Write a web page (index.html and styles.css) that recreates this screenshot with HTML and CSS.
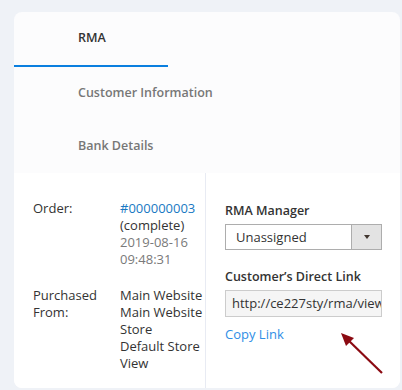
FILE: index.html
```html
<!DOCTYPE html>
<html>
<head>
    <meta charset="UTF-8">
    <title>RMA</title>
    <link rel="stylesheet" href="styles.css">
</head>
<body>
    <!-- card with tabs and the RMA info -->
    <div class="card">
        <div class="tabs">
            <div class="tab active">RMA</div>
            <div class="tab">Customer Information</div>
            <div class="tab">Bank Details</div>
        </div>

        <div class="content">
            <div class="info_col">
                <div class="info_row">
                    <span class="label">Order:</span>
                    <span class="value">
                        <a class="link">#000000003</a><br>
                        (complete)<br>
                        <span class="muted">2019-08-16<br>09:48:31</span>
                    </span>
                </div>
                <div class="info_row">
                    <span class="label">Purchased From:</span>
                    <span class="value">Main Website<br>Main Website Store<br>Default Store View</span>
                </div>
            </div>

            <div class="form_col">
                <div class="field">
                    <div class="field_label">RMA Manager</div>
                    <div class="select">
                        <span class="select_text">Unassigned</span>
                        <span class="select_btn"><i class="caret"></i></span>
                    </div>
                </div>
                <div class="field">
                    <div class="field_label">Customer’s Direct Link</div>
                    <div class="input">http://ce227sty/rma/view</div>
                    <a class="copy_link">Copy Link</a>
                </div>

                <!-- annotation arrow -->
                <svg class="arrow" width="50" height="50" viewBox="0 0 50 50">
                    <line x1="43" y1="42" x2="7" y2="7" stroke="#8b0a12" stroke-width="2.2"/>
                    <polygon points="2,2 15,7 7,15" fill="#8b0a12"/>
                </svg>
            </div>
        </div>
    </div>
</body>
</html>
```

FILE: styles.css
```css
/* base */
* { margin: 0; padding: 0; box-sizing: border-box; }
html, body { width: 100%; height: 100%; }
body {
    background: #eff2f7;
    font-family: "Open Sans", "Liberation Sans", sans-serif;
    font-size: 13px;
    color: #333;
    padding: 12px 2px 0 14px;
    overflow: hidden;
}

/* card */
.card {
    background: #fcfcfd;
    border-radius: 8px;
    height: 376px;
    overflow: hidden;
}

/* tabs */
.tabs { display: flex; flex-direction: column; }
.tab {
    width: 154px;
    height: 53px;
    padding-left: 64px;
    padding-bottom: 3px;
    display: flex;
    align-items: center;
    font-weight: 600;
    font-size: 12.5px;
    color: #777;
    white-space: nowrap;
}
.tab.active {
    height: 55px;
    color: #333;
    border-bottom: 2px solid #0a7fdf;
}

/* content area */
.content {
    background: #fff;
    display: flex;
    height: 215px;
}
.info_col {
    width: 192px;
    border-right: 1px solid #e8ebf3;
    padding: 27px 0 0 19px;
    line-height: 17px;
}
.info_row { display: flex; margin-bottom: 19px; }
.label { width: 87px; padding-right: 10px; }
.value { flex: 1; }
.link { color: #1979c3; }
.muted { color: #7a7a7a; }

/* form column */
.form_col {
    position: relative;
    flex: 1;
    padding: 29px 0 0 19px;
}
.field { margin-bottom: 18px; }
.field_label {
    font-weight: 600;
    font-size: 12.5px;
    line-height: 17px;
    margin-bottom: 5px;
    color: #333;
}
.select {
    width: 157px;
    height: 26px;
    border: 1px solid #adadad;
    display: flex;
}
.select_text { flex: 1; padding-left: 10px; line-height: 24px; }
.select_btn {
    width: 30px;
    background: #e3e3e3;
    border-left: 1px solid #adadad;
    display: flex;
    align-items: center;
    justify-content: center;
}
.caret {
    border-left: 3.5px solid transparent;
    border-right: 3.5px solid transparent;
    border-top: 4px solid #41362f;
}
.input {
    width: 157px;
    height: 27px;
    border: 1px solid #ccc;
    background: #f5f5f5;
    padding-left: 6px;
    line-height: 25px;
    white-space: nowrap;
    overflow: hidden;
}
.copy_link {
    display: block;
    color: #2e8ee6;
    margin-top: 9px;
    line-height: 17px;
}

/* arrow lying over the form */
.arrow { position: absolute; left: 133px; top: 158px; }
```
